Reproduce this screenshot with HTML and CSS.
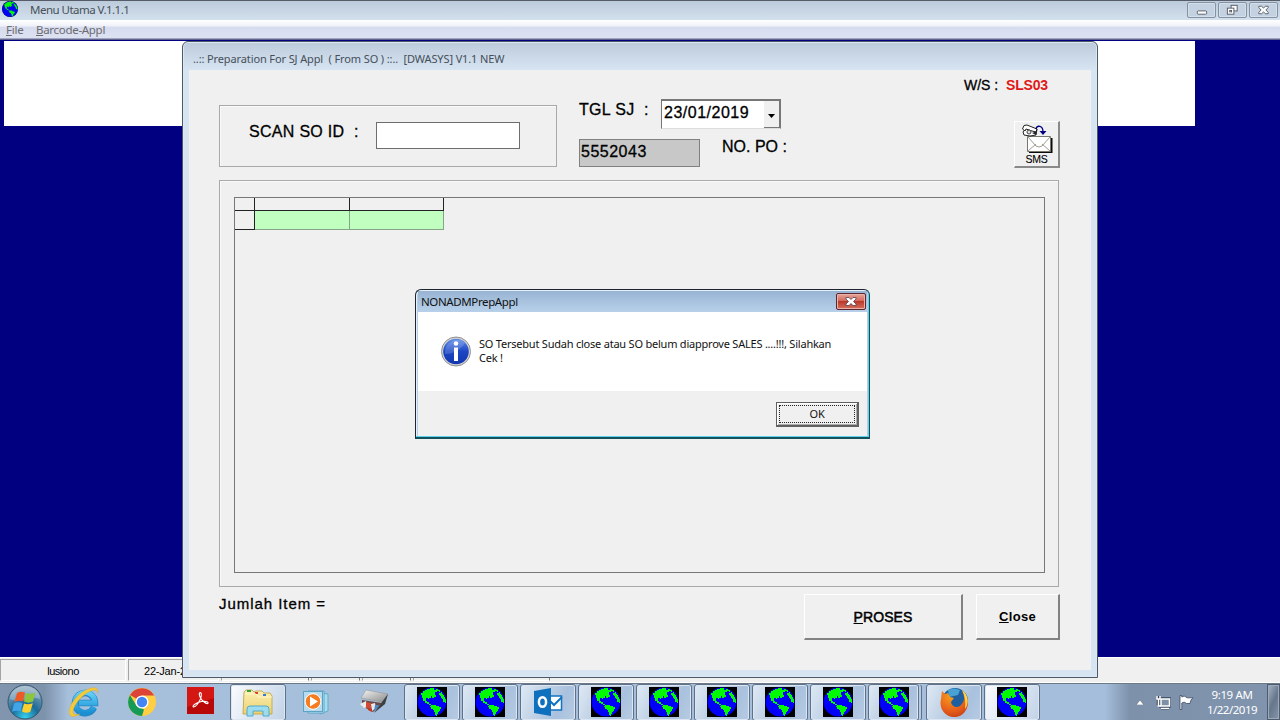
FILE: index.html
```html
<!DOCTYPE html>
<html lang="id">
<head>
<meta charset="utf-8">
<title>Menu Utama V.1.1.1</title>
<link rel="stylesheet" href="styles.css">
</head>
<body>
<svg class="defs" width="0" height="0" aria-hidden="true">
  <defs>
    <symbol id="land" viewBox="0 0 30 30">
      <circle cx="15" cy="15" r="14.500" fill="#0000fa"/>
      <path fill="#00fa00" d="M5 6h1V4h2V3h2V2h3V1h4v2h2V2h1v3h-2v3h1v2h-2v1h-2V9h-1v2h-2v1h-1v-1h-2v3h1v1h2v2h2v1h-2v-1h-2v-1H8v-2H6v-3H5V8H4V6z"/>
      <path fill="#00fa00" d="M14 18h5v1h3v1h2v2h-1v2h-1v1h-1v2h-1v2h-1v-1h-1v-3h-1v-2h-1v-1h-2v-2h-1v-1h1z"/>
      <path fill="#00fa00" d="M19 2h2v1h2v2h-1V4h-3zM22 6h2V5h1v2h1v1h1v2h1v2h1v4h-1v-1h-2v-3h-1v-1h-1V9h-1V8h-1z"/>
    </symbol>
    <linearGradient id="blueBall" x1="0" y1="0" x2="0" y2="1"><stop offset="0" stop-color="#5f8de8"/><stop offset=".5" stop-color="#1c46c4"/><stop offset="1" stop-color="#1236ae"/></linearGradient>
    <radialGradient id="orb" cx=".5" cy=".95" r=".9"><stop offset="0" stop-color="#35d0ee"/><stop offset=".45" stop-color="#1c6a99"/><stop offset="1" stop-color="#8fa9bd"/></radialGradient>
    <radialGradient id="fox" cx=".4" cy=".2" r=".9"><stop offset="0" stop-color="#f7a11c"/><stop offset=".6" stop-color="#e8601c"/><stop offset="1" stop-color="#c23a14"/></radialGradient>
    <linearGradient id="folder" x1="0" y1="0" x2="0" y2="1"><stop offset="0" stop-color="#fbf1b5"/><stop offset="1" stop-color="#ecd06e"/></linearGradient>
    <linearGradient id="ie" x1="0" y1="0" x2="0" y2="1"><stop offset="0" stop-color="#63d0f7"/><stop offset="1" stop-color="#1a8fd4"/></linearGradient>
    <linearGradient id="metal" x1="0" y1="0" x2="1" y2="1"><stop offset="0" stop-color="#f4f4f4"/><stop offset="1" stop-color="#8a8a8a"/></linearGradient>
  </defs>
</svg>

<div class="screen">
  <header class="titlebar">
    <svg class="title-icon" viewBox="0 0 30 30"><circle cx="15" cy="15" r="15" fill="#001030"/><use href="#land"/></svg>
    <span class="title-text">Menu Utama V.1.1.1</span>
    <div class="caption-buttons">
      <span class="cap"><svg viewBox="0 0 28 15"><rect x="9.500" y="8.500" width="10" height="3.500" rx="1" fill="#fff" stroke="#555b66"/></svg></span>
      <span class="cap"><svg viewBox="0 0 28 15"><g fill="#fff" stroke="#555b66"><rect x="12.500" y="2.500" width="6.500" height="6"/><rect x="8.500" y="5.500" width="7" height="6.500"/><rect x="11" y="8" width="2" height="1.500"/></g></svg></span>
      <span class="cap"><svg viewBox="0 0 28 15"><path fill="#fff" stroke="#555b66" d="M9 3.500h3l2 2 2-2h3v1.500l-2.500 2.500L19 10v1.500h-3l-2-2-2 2H9V10l2.500-2.500L9 5z"/></svg></span>
    </div>
  </header>
  <nav class="menubar"><span class="menu-file"><u>F</u>ile</span><span class="menu-bar"><u>B</u>arcode-Appl</span></nav>
  <main class="workspace"><div class="banner"></div></main>
  <footer class="statusbar">
    <div class="pane pane-user">lusiono</div>
    <div class="pane pane-date">22-Jan-2019</div>
    <div class="pane pane-a"></div><div class="pane pane-b"></div><div class="pane pane-b"></div><div class="pane pane-c"></div>
  </footer>
  <div class="taskbar">
    <div class="start">
      <svg width="36" height="36" viewBox="0 0 36 36"><circle cx="18" cy="18" r="17" fill="url(#orb)" stroke="#37566e"/><path d="M3 15a15 13 0 0 1 30 0c-8-4-20 5-30 0z" fill="#fff" opacity=".28"/><path fill="#ee5a24" d="M10 9c3-2 5-1.500 8-.5L16 17.500c-2.500-1-5-1-8.500.5z"/><path fill="#8bc63c" d="M19 9c3 1.300 6 1 9.500-.5L26 17.500c-3 1.500-6 1.500-9 0z"/><path fill="#41a3e8" d="M7 19.500c3-1.500 6-1.500 8.500-.3l-2 8.300c-2.500-1.200-5.500-1-8.500.3z"/><path fill="#fbcf2c" d="M17 19.500c2.500 1 5.500 1 8.800-.3l-2.500 8.600c-2.500 1.200-5.300 1.200-8.300-.3z"/></svg>
    </div>
    <div class="task"><svg width="30" height="30" viewBox="0 0 30 30"><path fill="none" stroke="#2387c4" stroke-width="6.500" d="M25 20.500a10 10 0 1 1 1-4.500H9"/><path fill="none" stroke="url(#ie)" stroke-width="5" d="M25 20a10 10 0 1 1 1-4H10"/><path fill="#f3cb3a" stroke="#d9a520" stroke-width=".4" d="M29 6C30-2 21 0 12 6 3 13-2 24 1 28c2 3 6 1 10-1-4 1-7 1-7-2 0-5 5-12 11-17 7-5 13-7 14-2z"/></svg></div>
    <div class="task"><svg width="28" height="28" viewBox="0 0 28 28"><circle cx="14" cy="14" r="14" fill="#ffce42"/><path fill="#db4437" d="M14 14L2 7A14 14 0 0 1 26.300 7.500H14z"/><path fill="#159a58" d="M14 28A14 14 0 0 1 1.900 7l6.500 10.500L14 20.500l2 1z"/><circle cx="14" cy="14" r="6.600" fill="#fff"/><circle cx="14" cy="14" r="5.200" fill="#4285f4"/></svg></div>
    <div class="task"><svg class="raise" width="27" height="27" viewBox="0 0 27 27"><rect width="27" height="27" fill="#b80808"/><path d="M0 0h27v11L0 20z" fill="#d41712"/><path fill="none" stroke="#fff" stroke-width="1.100" d="M12.500 6c2-1.500 2.500 2 1 6-2 4-5 8-7 8-2-1 3-4.500 8-5.500 5-.5 7 .5 6.500 1.700-1 1.500-5.500-1.700-7.500-5.200-1-2-1.500-4-1-5z"/></svg></div>
    <div class="task open bright"><svg width="32" height="30" viewBox="0 0 32 30"><path d="M2 5l2-2h6l2 2 2-1h6l2 2h6l2 3v18H1z" fill="url(#folder)" stroke="#c7ac52"/><path d="M5 3h4v2H5z" fill="#30a144"/><path d="M13 5h3v2h-3z" fill="#df3d32"/><path d="M21 7h3v2h-3z" fill="#377bd3"/><path d="M3 7h11l2 3h14" fill="none" stroke="#fff7c5"/><path fill="#9bdcf1" stroke="#54aacb" d="M5 29v-7q0-3 3-3h16q3 0 3 3v7h-6v-5H11v5z"/></svg></div>
    <div class="task"><svg width="28" height="26" viewBox="0 0 28 26"><path d="M10 3l16 2v17l-8 3z" fill="#a6dcf0" stroke="#66a9c8"/><path d="M6 2h16v22H6z" fill="#bae7f5" stroke="#5ca4c6"/><rect x="1.500" y="2.500" width="19" height="20" fill="#b8dced" stroke="#5ca4c6"/><circle cx="11" cy="12.500" r="7.800" fill="#f57c20" stroke="#fff"/><path fill="#fff" d="M8 7.500v10l8-5z"/></svg></div>
    <div class="task"><svg width="30" height="26" viewBox="0 0 30 26"><path d="M3 11l20 3-9 9-11-6z" fill="#6b4a44"/><path d="M1 15l6-3 2 6-4 1z" fill="#ececec"/><path d="M7 13l5 1v6l-5-1z" fill="#d04a36"/><path d="M12 15l4-1 1 5-4 3z" fill="#e6e9ee"/><path d="M16 16l4 0-1 3-4 4z" fill="#4e86c4"/><path d="M9 19l4 1 0 3-4-2z" fill="#c53424"/><path d="M7 1l22 4-6 8L2 9z" fill="url(#metal)" stroke="#8e8e8e" stroke-width=".5"/><path d="M23 13l6-8-3 10-11 9z" fill="#3e3e40"/></svg></div>
    <div class="task open"><svg class="globe" viewBox="0 0 30 30"><use href="#land"/></svg></div>
    <div class="task open"><svg class="globe" viewBox="0 0 30 30"><use href="#land"/></svg></div>
    <div class="task open"><svg width="30" height="28" viewBox="0 0 30 28"><path fill="#fff" stroke="#1173c1" stroke-width="1.500" d="M15 8h13.500v14H15z"/><path fill="none" stroke="#1173c1" stroke-width="2" d="M16 12l5 5 8-8"/><path fill="#0f70be" d="M1 3l17-3v28L1 25z"/><ellipse cx="9.500" cy="14" rx="3.600" ry="4.800" fill="none" stroke="#fff" stroke-width="2.500"/></svg></div>
    <div class="task open"><svg class="globe" viewBox="0 0 30 30"><use href="#land"/></svg></div>
    <div class="task open"><svg class="globe" viewBox="0 0 30 30"><use href="#land"/></svg></div>
    <div class="task open"><svg class="globe" viewBox="0 0 30 30"><use href="#land"/></svg></div>
    <div class="task open"><svg class="globe" viewBox="0 0 30 30"><use href="#land"/></svg></div>
    <div class="task open"><svg class="globe" viewBox="0 0 30 30"><use href="#land"/></svg></div>
    <div class="task open stacked"><svg class="globe" viewBox="0 0 30 30"><use href="#land"/></svg></div>
    <div class="task open"><svg width="29" height="30" viewBox="0 0 29 30"><circle cx="15" cy="14" r="13" fill="#1f5f9e"/><path d="M8 3a13 13 0 0 1 12 0l-2 5-9 2z" fill="#48a3d4"/><path fill="url(#fox)" d="M2 4l3 3 3-1 2 4 4 1-3 4c1 6 8 6 10 3 4-4 4-9 1-14 6 4 7 11 5 17-3 7-9 10-15 9C3 28-1 20 1 12z"/><path d="M22 3c7 5 7 14 3 19 1-7 0-13-3-19z" fill="#ffd64a"/></svg></div>
    <div class="task open bright"><svg class="globe" viewBox="0 0 30 30"><use href="#land"/></svg></div>
    <div class="tray">
      <svg width="8" height="5" viewBox="0 0 8 5"><path fill="#fff" stroke="#4e5d70" stroke-width=".5" d="M4 0l4 5H0z"/></svg>
      <svg class="net" width="15" height="15" viewBox="0 0 15 15"><path fill="none" stroke="#35445a" stroke-width="3.500" d="M5 4h8v7H5zM5 13.500h8M2.500 1v9"/><path fill="#7e90a6" stroke="#fff" stroke-width="1.500" d="M5 4h8.500v7H5z"/><path fill="none" stroke="#fff" stroke-width="1.500" d="M5 13.500h8M1 1v3h3V1M2.500 4v7H5"/></svg>
      <svg class="flag" width="15" height="15" viewBox="0 0 15 15"><path fill="#fff" stroke="#3c4a60" stroke-width=".8" d="M1 .5h1.800V2C5 .8 6 1 8 2.800h6L12 5l-1 3.500H7.500C6 7 4.500 7 2.800 8v6.500H1z"/></svg>
      <div class="clock"><span class="time">9:19 AM</span><span class="date">1/22/2019</span></div>
      <div class="peek"></div>
    </div>
  </div>

  <section class="window">
    <div class="window-title">..:: Preparation For SJ Appl&nbsp; ( From SO ) ::..&nbsp; [DWASYS] V1.1 NEW</div>
    <div class="client">
      <div class="form">
        <div class="scan"><label for="so">SCAN SO ID&nbsp; :</label><input id="so" type="text"></div>
        <div class="fields">
          <div class="date-row"><span class="tgl">TGL SJ&nbsp; :</span><div class="combo"><span>23/01/2019</span><i class="drop"><svg width="7" height="4" viewBox="0 0 7 4"><path d="M0 0h7L3.500 4z"/></svg></i></div></div>
          <div class="po-row"><div class="number">5552043</div><span class="nopo">NO. PO :</span></div>
        </div>
        <div class="side">
          <div class="ws"><span class="ws-label">W/S :</span><span class="ws-value">SLS03</span></div>
          <div class="sms"><svg width="32" height="29" viewBox="0 0 32 29"><path fill="#0b0b0b" d="M8 14h23.500v15H8z"/><path fill="#fff" stroke="#77776e" d="M6.500 12.500h23v15h-23z"/><path fill="none" stroke="#9d9d90" d="M7 27l8-7M29 27l-8-7M7 13l8 9q3 2 6 0l8-9"/><path fill="#fff" stroke="#222" d="M2 8l4-5 10 2-1 6-6 1-6-1z"/><path fill="#fff" stroke="#222" d="M1.500 5L3 1.500 6 1l10 4-1 3-4-1-6-2-1 2z"/><circle cx="8" cy="8" r="2" fill="#ddd" stroke="#444"/><path d="M11 9l5-2-1 4z" fill="#222"/><path fill="none" stroke="#000080" stroke-width="1.300" d="M15 5c1-4 7-4 7 3"/><path fill="#000080" d="M18.500 7h7L22 11z"/></svg><span>SMS</span></div>
        </div>
      </div>
      <div class="list-frame"><div class="list">
        <div class="grid"><i class="h"></i><i class="h"></i><i class="h"></i><i class="sel"></i><i class="cell"></i><i class="cell"></i></div>
      </div></div>
      <div class="bottom"><span class="total">Jumlah Item =</span><button class="btn proses"><span><u>P</u>ROSES</span></button><button class="btn close"><span><u>C</u>lose</span></button></div>
    </div>
  </section>

  <section class="dialog">
    <div class="dialog-title"><span>NONADMPrepAppl</span><i class="dialog-x"><svg width="28" height="15" viewBox="0 0 28 15"><path fill="#fff" stroke="#55404c" stroke-width=".8" d="M9 3.500h3l2 2 2-2h3v1.500l-2.500 2.500L19 10v1.500h-3l-2-2-2 2H9V10l2.500-2.500L9 5z"/></svg></i></div>
    <div class="message">
      <svg width="30" height="31" viewBox="0 0 30 31"><circle cx="15" cy="15.500" r="14.500" fill="#d4d4d4" stroke="#909090"/><circle cx="15" cy="15.500" r="12.800" fill="url(#blueBall)"/><path d="M4 16a12 12 0 0 1 20-9C20 13 13 18 4 18z" fill="#fff" opacity=".17"/><circle cx="15" cy="7.500" r="2.300" fill="#fff"/><path fill="#fff" d="M13 11.500h4V25h-4z"/></svg>
      <p>SO Tersebut Sudah close atau SO belum diapprove SALES ....!!!, Silahkan<br>Cek !</p>
    </div>
    <div class="actions"><button class="ok"><span>OK</span></button></div>
  </section>
</div>
</body>
</html>
```
FILE: styles.css
```css
* { box-sizing: border-box; }
body { margin: 0; }
button, input { font: inherit; color: inherit; padding: 0; margin: 0; border-radius: 0; }
svg { display: block; flex: none; }
.defs { position: absolute; }
.screen { position: relative; width: 1280px; height: 720px; overflow: hidden; display: flex; flex-direction: column; background: #000080; font-family: "Noto Sans", sans-serif; font-size: 12px; color: #111; white-space: nowrap; }

/* Main application frame */
.titlebar { height: 20px; flex: none; display: flex; align-items: flex-start; border-top: 1px solid #565d68; background: linear-gradient(#bccbdb, #d3e0ed); padding: 0 2px; }
.title-icon { width: 16px; height: 16px; }
.title-text { margin-left: 12px; line-height: 18px; color: #475058; font-size: 11.500px; letter-spacing: -.52px; }
.caption-buttons { margin-left: auto; display: flex; gap: 2px; padding-top: 1px; }
.cap { width: 29px; height: 16px; border: 1px solid #8491a2; border-radius: 2px; background: #c3d1e0; box-shadow: inset 0 0 0 1px #d4dfea; }
.cap svg { width: 27px; height: 14px; }
.menubar { height: 20px; flex: none; background: linear-gradient(#fff 0, #eef1f9 30%, #d6dcee 36%, #dde2f3 90%, #b5b9d0 91%, #3f4374 100%); color: #6c6c70; line-height: 19px; padding-left: 6px; display: flex; font-size: 11.500px; }
.menu-file { width: 30px; letter-spacing: -.2px; }
.menu-bar { letter-spacing: -.3px; }
.workspace { height: 617px; flex: none; padding: 1px 0 0 4px; }
.banner { width: 1191px; height: 85px; background: #fff; }
.statusbar { height: 26px; flex: none; display: flex; gap: 2px; padding: 1px 0 1px; background: #f0f0f0; border-top: 1px solid #fff; border-bottom: 1px solid #fff; font-family: "Liberation Sans", sans-serif; font-size: 11px; color: #000; }
.pane { border: 1px solid; border-color: #a4a4a4 #fff #fff #a4a4a4; line-height: 23px; }
.pane-user { width: 126px; text-align: center; letter-spacing: -.45px; }
.pane-date { width: 91px; padding-left: 15px; overflow: hidden; letter-spacing: -.2px; }
.pane-a { width: 88px; border-right-color: #777; }
.pane-b { width: 49px; border-right-color: #777; }
.pane-c { width: 137px; border-right-color: #777; }

/* Taskbar */
.taskbar { height: 37px; flex: none; display: flex; gap: 2px; border-top: 1px solid #6b7886; background: linear-gradient(90deg, #8196ae 0, #7d92ab 44px, #a6bfdb 68px, #a5bedb 1105px, #7d91aa 1130px, #8094ad 100%); }
.start { width: 54px; padding-left: 7px; flex: none; }
.task { width: 56px; height: 37px; flex: none; display: flex; align-items: center; justify-content: center; }
.task svg { margin-top: -1px; }
.task .raise { margin-top: -4px; }
.open { border: 1px solid #5f7188; border-radius: 3px; box-shadow: inset 0 0 0 1px #dbe6f2; background: linear-gradient(115deg, #dfe9f4 0, #bdd0e5 42%, #a9c1de 70%, #b7cbe2 100%); }
.bright { background: linear-gradient(115deg, #fbfcfe 0, #dbe6f2 50%, #c2d3e7 100%); }
.stacked { width: 51px; margin-right: 5px; box-shadow: inset 0 0 0 1px #dbe6f2, 3px 0 0 -1px #b7cbe2, 4px 0 0 -1px #5f7188; }
.globe { width: 30px; height: 30px; background: #000; }
.tray { flex: 1; display: flex; align-items: center; padding-left: 94px; }
.net { margin-left: 12px; }
.flag { margin-left: 8px; }
.clock { margin-left: 5px; width: 66px; display: flex; flex-direction: column; align-items: center; color: #fff; font-size: 11.500px; line-height: 15.500px; letter-spacing: -.5px; }
.time { letter-spacing: -.35px; }
.peek { margin-left: auto; width: 13px; height: 36px; border: 1px solid #4e5c6e; background: linear-gradient(115deg, #a7b4c4, #66768b 50%, #8796aa); box-shadow: inset 0 0 0 1px #9aa9bb; }

/* Form window */
.window { position: absolute; left: 182px; top: 41px; width: 916px; height: 637px; border: 1px solid #4c5866; border-radius: 6px 6px 0 0; background: linear-gradient(#bccbdb, #d7e4f2 28px); padding: 0 6px 7px; display: flex; flex-direction: column; box-shadow: inset 0 0 0 1px #dce8f4; }
.window-title { height: 28px; line-height: 34px; padding-left: 4px; color: #454f59; font-size: 11px; letter-spacing: -.12px; }
.client { flex: 1; padding: 0 31px 0 30px; background: #f0f0f0; display: flex; flex-direction: column; font-family: "Liberation Sans", sans-serif; font-size: 16px; color: #000; letter-spacing: .3px; -webkit-text-stroke: .3px #000; }
.form { height: 110px; display: flex; }
.scan { margin-top: 35px; width: 338px; height: 62px; border: 1px solid #a9a9a9; box-shadow: inset 1px 1px #fafafa; display: flex; align-items: flex-start; padding: 16px 0 0 29px; }
.scan label { width: 127px; line-height: 20px; }
.scan input { width: 144px; height: 27px; border: 1px solid #6e6e6e; background: #fff; }
.fields { margin-left: 22px; padding-top: 29px; }
.date-row { display: flex; height: 40px; }
.tgl { width: 82px; line-height: 21px; }
.combo { width: 120px; height: 30px; border: 1px solid #777; border-top-width: 2px; border-bottom-color: #ddd; background: #fff; display: flex; justify-content: space-between; padding-left: 2px; line-height: 24px; letter-spacing: .5px; }
.drop { width: 16px; background: #f0f0f0; border: solid #777; border-width: 0 1px 1px 0; display: flex; align-items: center; justify-content: center; padding-top: 3px; }
.po-row { display: flex; }
.number { width: 121px; height: 28px; border: 1px solid #808080; background: #c8c8c8; line-height: 24px; padding-left: 1px; letter-spacing: .5px; }
.nopo { margin-left: 22px; line-height: 16px; letter-spacing: 0; }
.side { margin-left: auto; width: 96px; display: flex; flex-direction: column; padding-top: 7px; font-size: 14px; }
.ws { display: flex; line-height: 17px; height: 44px; }
.ws-label { width: 42px; letter-spacing: 0; }
.ws-value { color: #e01818; font-weight: bold; letter-spacing: -.2px; -webkit-text-stroke: 0; }
.sms { align-self: flex-end; width: 46px; height: 47px; border: solid; border-width: 1px 2px 2px 1px; border-color: #fff #8a8a8a #8a8a8a #fff; display: flex; flex-direction: column; align-items: center; padding-top: 2px; font-size: 10.500px; line-height: 12px; letter-spacing: -.2px; -webkit-text-stroke: .1px #000; }
.list-frame { width: 840px; height: 407px; border: 1px solid #a9a9a9; box-shadow: inset 1px 1px #fafafa; padding: 16px 13px 13px 14px; }
.list { height: 376px; border: 1px solid #777; }
.grid { display: grid; width: 210px; grid-template-columns: 20px 95px 94px; grid-template-rows: 13px 19px; }
.h, .sel { border: solid #222; border-width: 0 1px 1px 0; }
.cell { border: solid #86a486; border-width: 0 1px 1px 0; background: #c0ffc0; }
.bottom { display: flex; padding-top: 7px; margin-right: -1px; font-size: 14px; }
.total { width: 585px; line-height: 20px; font-size: 15px; letter-spacing: .95px; }
.btn { height: 46px; border: solid; border-width: 1px 2px 2px 1px; border-color: #fff #828282 #828282 #fff; background: #f0f0f0; letter-spacing: .1px; -webkit-text-stroke: .5px #000; }
.proses { width: 159px; }
.close { width: 84px; margin-left: 13px; font-weight: bold; font-size: 13px; letter-spacing: .3px; -webkit-text-stroke: 0; }

/* Message box */
.dialog { position: absolute; left: 415px; top: 289px; width: 455px; height: 150px; border: 1px solid #1c2530; border-bottom: 2px solid #12525e; border-right-color: #12525e; border-radius: 6px 6px 0 0; background: #b6cfe8; display: flex; flex-direction: column; padding: 0 2px 1px; box-shadow: inset -1px -1px #5fd2ea, inset 1px 1px #e4eff9; }
.dialog-title { height: 21px; flex: none; display: flex; justify-content: space-between; padding: 0 1px 0 3px; line-height: 22px; font-size: 11.500px; letter-spacing: -.38px; background: linear-gradient(#98b4d3, #b8d0ea); margin-top: 1px; }
.dialog-x { width: 30px; height: 17px; margin-top: 2px; border: 1px solid #5e2630; border-radius: 2px; background: linear-gradient(#e7a59c, #d3695b 45%, #b93a2b 50%, #d5715c); box-shadow: inset 0 0 0 1px #e9b3aa; }
.message { height: 79px; flex: none; background: #fff; display: flex; padding: 24px 0 0 23px; }
.message p { margin: 1px 0 0 8px; line-height: 14px; font-size: 11px; letter-spacing: -.22px; }
.actions { flex: 1; background: #f0f0f0; display: flex; justify-content: flex-end; padding: 11px 8px 0 0; }
.ok { width: 83px; height: 25px; border: solid #606060; border-width: 1px 2px 2px 1px; background: #f0f0f0; padding: 2px; box-shadow: inset 1px 1px #fff, inset -1px -1px #aaa; font-size: 11px; letter-spacing: -.3px; }
.ok span { display: block; height: 18px; line-height: 15px; border: 1px dotted #222; }
```
